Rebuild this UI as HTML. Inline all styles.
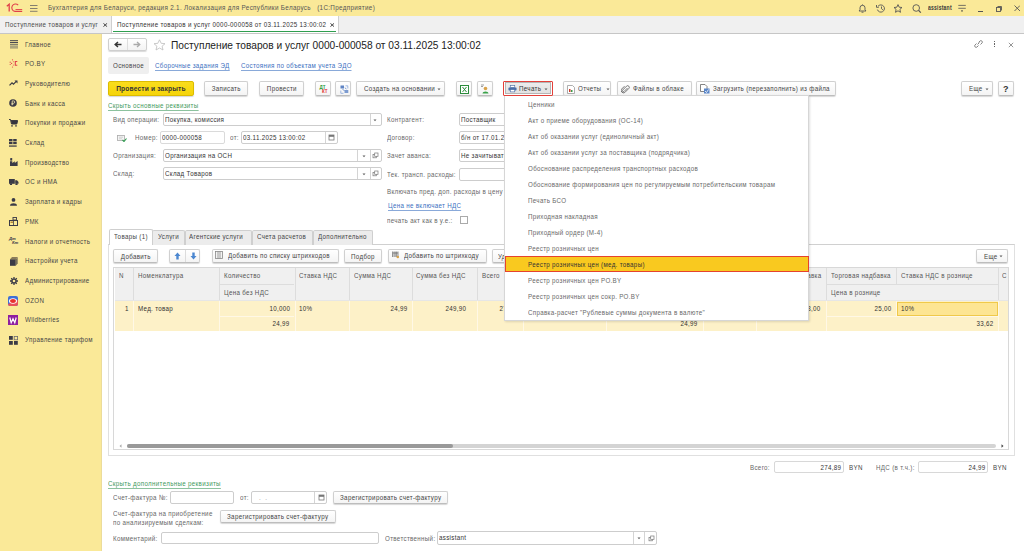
<!DOCTYPE html>
<html><head><meta charset="utf-8">
<style>
*{box-sizing:border-box;margin:0;padding:0}
html,body{width:1024px;height:551px;overflow:hidden;background:#fff;font-family:"Liberation Sans",sans-serif;font-size:7px;color:#4a4a4a}
.a{position:absolute}
.t{position:absolute;white-space:nowrap;line-height:10px;height:10px;font-size:7.8px;transform:scaleX(.795);transform-origin:0 50%;letter-spacing:.4px;margin-top:0px}
.r{transform-origin:100% 50%;text-align:right}
.sx{display:inline-block;transform:scaleX(.795);font-size:7.8px;letter-spacing:.4px;position:relative;top:.8px}
#title{left:0;top:0;width:1024px;height:16px;background:#fae998}
#tabs{left:0;top:16px;width:1024px;height:18px;background:#f0f0f0;border-bottom:1px solid #c6c6c6}
#side{left:0;top:34px;width:101.8px;height:517px;background:#fae998;border-right:1px solid #ecdc9a}
.si{left:25px;color:#474747;margin-top:0.3px}
.btn{position:absolute;display:flex;justify-content:center;align-items:center;border:1px solid #d0d0d0;border-bottom-color:#bdbdbd;border-radius:2px;background:linear-gradient(#ffffff,#f4f4f4);box-shadow:0 1px 1px rgba(0,0,0,.16);color:#444;text-align:center;white-space:nowrap;line-height:12px;font-size:7px}
.inp{position:absolute;border:1px solid #cdcdcd;border-radius:2px;background:#fff;color:#333;white-space:nowrap;line-height:10.2px;padding-left:0.5px;font-size:7px;overflow:hidden}
.lbl{color:#676767}
.dd{position:absolute;top:0;bottom:0;border-left:1px solid #d4d4d4}
.link-g{color:#3f9a5d}.link-g::after{content:"";position:absolute;left:0;right:0;top:9px;height:.8px;background:rgba(63,154,93,.6)}
.link-b{color:#3b6fc0}.link-b::after{content:"";position:absolute;left:0;right:0;top:9px;height:.8px;background:rgba(59,111,192,.6)}
</style></head><body>

<!-- Title bar -->
<div id="title" class="a">
  <svg class="a" style="left:6px;top:3px" width="17" height="10" viewBox="0 0 17 10">
    <path d="M0.8 3.2L3.2 1.2V8.6" stroke="#e0404a" stroke-width="1.3" fill="none"/>
    <path d="M12.2 2.2A3.7 3.7 0 1 0 9 8.4H16.2" stroke="#e0404a" stroke-width="1.1" fill="none"/>
    <path d="M9.5 6.5H16.2" stroke="#e0404a" stroke-width="0.9" fill="none"/>
  </svg>
  <svg class="a" style="left:30px;top:5px" width="8" height="7" viewBox="0 0 8 7">
    <path d="M0 0.5H7.5M0 3.5H7.5M0 6.3H7.5" stroke="#77736a" stroke-width="0.9"/>
  </svg>
  <div class="t" style="left:48px;top:3px;color:#555;transform:scaleX(.807)">Бухгалтерия для Беларуси, редакция 2.1. Локализация для Республики Беларусь&nbsp;&nbsp; (1С:Предприятие)</div>
</div>

<!-- Tab bar -->
<div id="tabs" class="a">
  <div class="t" style="left:5px;top:3.6px;color:#4a4a4a">Поступление товаров и услуг</div><svg class="a" style="left:103px;top:7px" width="4.5" height="4" viewBox="0 0 4.5 4"><path d="M0.4 0.3L4.1 3.7M4.1 0.3L0.4 3.7" stroke="#444" stroke-width="1"/></svg>
  <div class="a" style="left:111px;top:0;width:228px;height:17px;background:#fff;border-left:1px solid #cfcfcf;border-right:1px solid #cfcfcf"></div>
  <div class="a" style="left:113px;top:14.5px;width:223px;height:1.5px;background:#2f9e4f"></div>
  <div class="t" style="left:117px;top:3.6px;color:#333;transform:scaleX(.798)">Поступление товаров и услуг 0000-000058 от 03.11.2025 13:00:02</div><svg class="a" style="left:329.5px;top:7px" width="4.5" height="4" viewBox="0 0 4.5 4"><path d="M0.4 0.3L4.1 3.7M4.1 0.3L0.4 3.7" stroke="#444" stroke-width="1"/></svg>
</div>

<!-- Sidebar -->
<div id="side" class="a"></div>
<div id="sideitems">
  <div class="t si" style="top:39.3px">Главное</div>
  <div class="t si" style="top:59px">РО.BY</div>
  <div class="t si" style="top:78.7px">Руководителю</div>
  <div class="t si" style="top:98.4px">Банк и касса</div>
  <div class="t si" style="top:118.1px">Покупки и продажи</div>
  <div class="t si" style="top:137.8px">Склад</div>
  <div class="t si" style="top:157.5px">Производство</div>
  <div class="t si" style="top:177.2px">ОС и НМА</div>
  <div class="t si" style="top:196.9px">Зарплата и кадры</div>
  <div class="t si" style="top:216.6px">РМК</div>
  <div class="t si" style="top:236.3px">Налоги и отчетность</div>
  <div class="t si" style="top:256px">Настройки учета</div>
  <div class="t si" style="top:275.7px">Администрирование</div>
  <div class="t si" style="top:295.4px">OZON</div>
  <div class="t si" style="top:315.1px">Wildberries</div>
  <div class="t si" style="top:334.8px">Управление тарифом</div>
</div>

<!-- Header of form -->
<div class="a" style="left:108px;top:38px;width:39px;height:13px;border:1px solid #cfcfcf;border-radius:2px;background:linear-gradient(#fff,#f3f3f3);box-shadow:0 1px 1px rgba(0,0,0,.15)"></div>
<div class="a" style="left:127px;top:39px;width:1px;height:11px;background:#dedede"></div>
<svg class="a" style="left:114px;top:41px" width="8" height="7" viewBox="0 0 8 7"><path d="M7.5 3.5H1.5M4 1L1.2 3.5L4 6" stroke="#333" stroke-width="1.5" fill="none"/></svg>
<svg class="a" style="left:133px;top:41px" width="8" height="7" viewBox="0 0 8 7"><path d="M0.5 3.5H6.5M4 1L6.8 3.5L4 6" stroke="#aaa" stroke-width="1.3" fill="none"/></svg>
<svg class="a" style="left:153px;top:39px" width="13" height="12" viewBox="0 0 13 12"><path d="M6.5 0.8L8.2 4.3L12 4.7L9.1 7.2L10 11L6.5 9L3 11L3.9 7.2L1 4.7L4.8 4.3Z" stroke="#bdbdbd" stroke-width="0.8" fill="none"/></svg>
<div class="a" style="left:171px;top:38.7px;height:14px;line-height:14px;font-size:10.18px;color:#222;white-space:nowrap">Поступление товаров и услуг 0000-000058 от 03.11.2025 13:00:02</div>
<svg class="a" style="left:973px;top:39px" width="11" height="10" viewBox="0 0 11 10"><path d="M4.5 5.5L6.5 3.5M3.5 4.5L1.8 6.2A1.5 1.5 0 0 0 3.8 8.2L5.5 6.5M7.5 5.5L9.2 3.8A1.5 1.5 0 0 0 7.2 1.8L5.5 3.5" stroke="#777" stroke-width="0.9" fill="none"/></svg>
<div class="a" style="left:993.5px;top:41px;width:1.3px;height:6px;border-top:1.5px solid #666;border-bottom:1.5px solid #666;background:linear-gradient(#fff 1px,#666 1px,#666 3px,#fff 3px)"></div>
<svg class="a" style="left:1007.5px;top:41.5px" width="6" height="6" viewBox="0 0 6 6"><path d="M0.8 0.8L5.2 5.2M5.2 0.8L0.8 5.2" stroke="#8a8a8a" stroke-width="0.9"/></svg>

<div class="a" style="left:108px;top:57px;width:41px;height:17px;background:#efefef;border-radius:2px"></div>
<div class="t" style="left:113px;top:61px;color:#444">Основное</div>
<div class="t link-b" style="left:155px;top:61px">Сборочные задания ЭД</div>
<div class="t link-b" style="left:241px;top:61px">Состояния по объектам учета ЭДО</div>

<!-- Command bar -->
<div class="btn" style="left:108px;top:81.2px;width:86px;height:14.4px;background:linear-gradient(#fadd1c,#f5d40a);border-color:#dcbc00;color:#333"><span class="sx" style="font-weight:bold;transform:scaleX(.85);letter-spacing:.2px">Провести и закрыть</span></div>
<div class="btn" style="left:204px;top:81.2px;width:44px;height:14.4px"><span class="sx">Записать</span></div>
<div class="btn" style="left:259px;top:81.2px;width:45px;height:14.4px"><span class="sx">Провести</span></div>
<div class="btn" style="left:315px;top:81.2px;width:16px;height:14.4px"></div>
<div class="a" style="left:319.5px;top:84.5px;font-size:4.5px;line-height:5px;color:#2a9a3a;font-weight:bold">ДТ</div>
<div class="a" style="left:322px;top:88.5px;font-size:4.5px;line-height:5px;color:#e03030;font-weight:bold">КТ</div>
<div class="btn" style="left:335px;top:81.2px;width:16px;height:14.4px"></div>
<svg class="a" style="left:339.5px;top:84.5px" width="9" height="9" viewBox="0 0 9 9"><rect x="0.5" y="0.5" width="3.5" height="3" fill="#5f84c4"/><rect x="4.5" y="5" width="3.8" height="3" fill="#7c9bd0"/><path d="M5.5 0.8H7.8V3.5M3.5 8.3H0.8V5.5" stroke="#8aa7da" stroke-width="0.8" fill="none"/><path d="M2.5 4.5L4.5 5.5M4.8 2.8L6.5 4" stroke="#5f84c4" stroke-width="0.8"/></svg>
<div class="btn" style="left:356px;top:81.2px;width:89px;height:14.4px;justify-content:flex-start;padding-left:7px"><span class="sx" style="transform-origin:0 50%;transform:scaleX(.8)">Создать на основании</span></div>
<svg class="a tri" style="left:437.3px;top:88.3px" width="4" height="3" viewBox="0 0 4 3"><path d="M0.5 0.5H3.5L2 2.2Z" fill="#5a5a5a"/></svg>
<div class="btn" style="left:456px;top:81.2px;width:15.5px;height:14.4px"></div>
<div class="a" style="left:460px;top:85px;width:8.5px;height:8.5px;border:1px solid #2c8c3c;background:#fff"></div>
<svg class="a" style="left:461px;top:86px" width="7" height="7" viewBox="0 0 7 7"><path d="M1.5 1L5.5 6M5.5 1L1.5 6" stroke="#2c8c3c" stroke-width="1"/></svg>
<div class="btn" style="left:477px;top:81.2px;width:16px;height:14.4px"></div>
<svg class="a" style="left:480px;top:84px" width="10" height="10" viewBox="0 0 10 10"><circle cx="5.5" cy="4.5" r="1.8" fill="#d9a34a"/><path d="M2.5 9.5C2.5 6.8 8.5 6.8 8.5 9.5Z" fill="#3aa24a"/><path d="M1 1H4M1 2.5H3" stroke="#777" stroke-width="0.7"/></svg>
<!-- Печать pressed with red outline -->
<div class="a" style="left:503px;top:80.8px;width:50px;height:14.8px;border:1.3px solid #e3403a;border-radius:1px;z-index:5"></div>
<div class="a" style="left:504.8px;top:82.3px;width:46.5px;height:11.8px;background:linear-gradient(#ececec,#e2e2e2);border:1px solid #b5b5b5"></div>
<svg class="a" style="left:507.5px;top:85px" width="9" height="7.5" viewBox="0 0 10 8"><rect x="2.5" y="0.5" width="5" height="2" fill="#fff" stroke="#4b6ea8" stroke-width="0.7"/><rect x="0.5" y="2.5" width="9" height="3.5" rx="0.8" fill="#4b6ea8"/><rect x="2.5" y="5" width="5" height="2.5" fill="#fff" stroke="#4b6ea8" stroke-width="0.7"/></svg>
<div class="t" style="left:519px;top:84px;color:#333">Печать</div>
<svg class="a tri" style="left:544.3px;top:88.3px" width="4" height="3" viewBox="0 0 4 3"><path d="M0.5 0.5H3.5L2 2.2Z" fill="#5a5a5a"/></svg>
<div class="btn" style="left:563px;top:81.2px;width:48px;height:14.4px"></div>
<svg class="a" style="left:567px;top:84.5px" width="8" height="9" viewBox="0 0 8 9"><path d="M0.5 0.5H5.5L7.5 2.5V8.5H0.5Z" fill="#fff" stroke="#999" stroke-width="0.8"/><rect x="2" y="4" width="1.5" height="3" fill="#d03a2a"/><rect x="4" y="5" width="1.5" height="2" fill="#3a9a4a"/></svg>
<div class="t" style="left:578px;top:84px;color:#444">Отчеты</div>
<svg class="a tri" style="left:605.8px;top:88.3px" width="4" height="3" viewBox="0 0 4 3"><path d="M0.5 0.5H3.5L2 2.2Z" fill="#5a5a5a"/></svg>
<div class="btn" style="left:617px;top:81.2px;width:74.5px;height:14.4px"></div>
<svg class="a" style="left:621px;top:84.5px" width="9" height="9" viewBox="0 0 9 9"><path d="M6.5 3L3 6.5A1 1 0 0 1 1.6 5.1L5.5 1.2A1.6 1.6 0 0 1 7.8 3.5L3.8 7.5A2.4 2.4 0 0 1 0.5 4.2L3.5 1.2" stroke="#666" stroke-width="0.9" fill="none"/></svg>
<div class="t" style="left:632.5px;top:84px;color:#444">Файлы в облаке</div>
<div class="btn" style="left:696px;top:81.2px;width:139.5px;height:14.4px"></div>
<svg class="a" style="left:700px;top:84px" width="10" height="10" viewBox="0 0 10 10"><path d="M0.5 0.5H5L7 2.5V7.5H0.5Z" fill="#fff" stroke="#666" stroke-width="0.8"/><path d="M4 4.5H9.5V9.5H4Z" fill="#5a86c8"/><path d="M5 7L6.5 8.5L8.5 5.5" stroke="#fff" stroke-width="0.8" fill="none"/></svg>
<div class="t" style="left:712.5px;top:84px;color:#444">Загрузить (перезаполнить) из файла</div>
<div class="btn" style="left:961px;top:81.2px;width:32px;height:14.4px;justify-content:flex-start;padding-left:7px"><span class="sx" style="transform-origin:0 50%">Еще</span></div>
<svg class="a tri" style="left:984.8px;top:88.3px" width="4" height="3" viewBox="0 0 4 3"><path d="M0.5 0.5H3.5L2 2.2Z" fill="#5a5a5a"/></svg>
<div class="btn" style="left:998px;top:81.2px;width:16px;height:14.4px;font-weight:bold;color:#333"><span class="sx" style="font-size:9px;transform:none">?</span></div>

<div class="t link-g" style="left:108px;top:101px">Скрыть основные реквизиты</div>

<!-- Form fields -->
<div class="t lbl" style="left:113px;top:115px">Вид операции:</div>
<div class="inp" style="left:163px;top:113px;width:218.5px;height:13px"><span class="sx" style="transform-origin:0 50%">Покупка, комиссия</span><div class="dd" style="left:205.8px"></div></div>
<svg class="a tri" style="left:373.3px;top:118.8px" width="4" height="3" viewBox="0 0 4 3"><path d="M0.5 0.5H3.5L2 2.2Z" fill="#5a5a5a"/></svg>

<svg class="a" style="left:117px;top:134.5px" width="10" height="7" viewBox="0 0 10 7"><rect x="0.5" y="0.5" width="7" height="5" fill="#f4f4f4" stroke="#aaa" stroke-width="0.8"/><path d="M2 2.2H6M2 3.8H5" stroke="#bbb" stroke-width="0.6"/><path d="M5.5 5L7 6.5L9.5 3.5" stroke="#2f9a4f" stroke-width="1.1" fill="none"/></svg>
<div class="t lbl" style="left:134.5px;top:133px">Номер:</div>
<div class="inp" style="left:160.3px;top:131.3px;width:64.5px;height:12.8px;border-color:#dadada"><span class="sx" style="transform-origin:0 50%">0000-000058</span></div>
<div class="t lbl" style="left:230px;top:133px">от:</div>
<div class="inp" style="left:241.2px;top:131.2px;width:97px;height:12.5px"><span class="sx" style="transform-origin:0 50%">03.11.2025 13:00:02</span><div class="dd" style="left:83.3px"></div></div>
<svg class="a" style="left:328px;top:134px" width="7" height="7" viewBox="0 0 7 7"><rect x="1" y="1" width="5" height="5" fill="#fff" stroke="#777" stroke-width="0.8"/><rect x="1" y="1" width="5" height="1.8" fill="#777"/></svg>

<div class="t lbl" style="left:113px;top:151px">Организация:</div>
<div class="inp" style="left:163px;top:149.2px;width:218.5px;height:13px"><span class="sx" style="transform-origin:0 50%">Организация на ОСН</span><div class="dd" style="left:193.3px"></div><div class="dd" style="left:205.6px"></div></div>
<svg class="a tri" style="left:362.1px;top:154.8px" width="4" height="3" viewBox="0 0 4 3"><path d="M0.5 0.5H3.5L2 2.2Z" fill="#5a5a5a"/></svg>
<svg class="a" style="left:372px;top:152px" width="7" height="7" viewBox="0 0 7 7"><rect x="1" y="2.5" width="3.3" height="3.3" fill="none" stroke="#777" stroke-width="0.7"/><rect x="2.7" y="1" width="3.3" height="3.3" fill="#fff" stroke="#777" stroke-width="0.7"/></svg>

<div class="t lbl" style="left:113px;top:169px">Склад:</div>
<div class="inp" style="left:163px;top:167.3px;width:218.5px;height:13px"><span class="sx" style="transform-origin:0 50%">Склад Товаров</span><div class="dd" style="left:193.3px"></div><div class="dd" style="left:205.6px"></div></div>
<svg class="a tri" style="left:362.1px;top:172.8px" width="4" height="3" viewBox="0 0 4 3"><path d="M0.5 0.5H3.5L2 2.2Z" fill="#5a5a5a"/></svg>
<svg class="a" style="left:372px;top:170px" width="7" height="7" viewBox="0 0 7 7"><rect x="1" y="2.5" width="3.3" height="3.3" fill="none" stroke="#777" stroke-width="0.7"/><rect x="2.7" y="1" width="3.3" height="3.3" fill="#fff" stroke="#777" stroke-width="0.7"/></svg>

<div class="t lbl" style="left:386.6px;top:115px">Контрагент:</div>
<div class="inp" style="left:459.3px;top:113.3px;width:150px;height:12.5px"><span class="sx" style="transform-origin:0 50%">Поставщик</span></div>
<div class="t lbl" style="left:386.6px;top:133px">Договор:</div>
<div class="inp" style="left:459.3px;top:131.3px;width:150px;height:12.3px"><span class="sx" style="transform-origin:0 50%">б/н от 17.01.2025</span></div>
<div class="t lbl" style="left:386.6px;top:151px">Зачет аванса:</div>
<div class="inp" style="left:459.3px;top:149.2px;width:150px;height:12.8px"><span class="sx" style="transform-origin:0 50%">Не зачитывать</span></div>
<div class="t lbl" style="left:386.6px;top:169.5px">Тек. трансп. расходы:</div>
<div class="inp" style="left:459.3px;top:167.5px;width:150px;height:13px"></div>
<div class="t lbl" style="left:386.6px;top:187px">Включать пред. доп. расходы в цену</div>
<div class="t link-b" style="left:387.8px;top:201px">Цена не включает НДС</div>
<div class="t lbl" style="left:386.6px;top:216px">печать акт как в у.е.:</div>
<div class="a" style="left:459.7px;top:216.3px;width:8px;height:8px;border:1px solid #aaa;background:#fff"></div>

<!-- Tabs -->
<div class="a" style="left:108px;top:244px;width:906.5px;height:211.5px;border:1px solid #e0e0e0;border-top-color:#d0d0d0"></div>
<div class="a" style="left:152px;top:229.5px;width:32.5px;height:15px;background:#ececec;border:1px solid #cfcfcf;border-bottom:none;border-radius:2px 2px 0 0"></div>
<div class="a" style="left:184.5px;top:229.5px;width:67px;height:15px;background:#ececec;border:1px solid #cfcfcf;border-bottom:none;border-radius:2px 2px 0 0"></div>
<div class="a" style="left:251.5px;top:229.5px;width:61px;height:15px;background:#ececec;border:1px solid #cfcfcf;border-bottom:none;border-radius:2px 2px 0 0"></div>
<div class="a" style="left:312.5px;top:229.5px;width:60px;height:15px;background:#ececec;border:1px solid #cfcfcf;border-bottom:none;border-radius:2px 2px 0 0"></div>
<div class="a" style="left:108.5px;top:229px;width:44px;height:16px;background:#fff;border:1px solid #cfcfcf;border-bottom:none;border-radius:2px 2px 0 0"></div>
<div class="t" style="left:113.5px;top:232px;color:#444">Товары (1)</div>
<div class="t" style="left:157.5px;top:232px;color:#444">Услуги</div>
<div class="t" style="left:189px;top:232px;color:#444">Агентские услуги</div>
<div class="t" style="left:256.5px;top:232px;color:#444">Счета расчетов</div>
<div class="t" style="left:317.5px;top:232px;color:#444">Дополнительно</div>

<!-- Table toolbar -->
<div class="btn" style="left:113px;top:249px;width:44.7px;height:13.5px"><span class="sx">Добавить</span></div>
<div class="btn" style="left:168.7px;top:249px;width:31.3px;height:13.5px"></div>
<div class="a" style="left:185px;top:250px;width:1px;height:12px;background:#dcdcdc"></div>
<svg class="a" style="left:174px;top:252px" width="7" height="8" viewBox="0 0 7 8"><path d="M3.5 0.5L6.5 4H4.7V7.5H2.3V4H0.5Z" fill="#4a86d0"/></svg>
<svg class="a" style="left:189.5px;top:252px" width="7" height="8" viewBox="0 0 7 8"><path d="M3.5 7.5L6.5 4H4.7V0.5H2.3V4H0.5Z" fill="#4a86d0"/></svg>
<div class="btn" style="left:211.7px;top:249px;width:127.2px;height:13.5px"></div>
<svg class="a" style="left:215px;top:251px" width="8" height="8" viewBox="0 0 8 8"><rect x="0.5" y="0.5" width="7" height="7" fill="#f3f3f3" stroke="#888" stroke-width="0.8"/><path d="M3 0.5V7.5M5 0.5V7.5" stroke="#888" stroke-width="0.8"/></svg>
<div class="t" style="left:227.5px;top:251px;color:#444">Добавить по списку штрихкодов</div>
<div class="btn" style="left:344.2px;top:249px;width:38.2px;height:13.5px"><span class="sx">Подбор</span></div>
<div class="btn" style="left:387.7px;top:249px;width:99.3px;height:13.5px"></div>
<svg class="a" style="left:392px;top:251px" width="8" height="8" viewBox="0 0 8 8"><path d="M0.5 0.5V6M2 0.5V6M3.2 0.5V6M4.6 0.5V6M6 0.5V6" stroke="#666" stroke-width="0.7"/><path d="M1 2H6" stroke="#666" stroke-width="0.7"/><circle cx="5.8" cy="6" r="1.3" fill="#d9a34a"/></svg>
<div class="t" style="left:403.5px;top:251px;color:#444">Добавить по штрихкоду</div>
<div class="btn" style="left:492px;top:249px;width:40px;height:13.5px;justify-content:flex-start;padding-left:5px"><span class="sx" style="transform-origin:0 50%">Удалить</span></div>
<div class="btn" style="left:975.5px;top:249px;width:32.3px;height:13.5px;justify-content:flex-start;padding-left:7px"><span class="sx" style="transform-origin:0 50%">Еще</span></div>
<svg class="a tri" style="left:999.3px;top:255.3px" width="4" height="3" viewBox="0 0 4 3"><path d="M0.5 0.5H3.5L2 2.2Z" fill="#5a5a5a"/></svg>

<!-- Table -->
<div class="a" style="left:113px;top:267.3px;width:895.5px;height:182.5px;border:1px solid #d8d8d8;background:#fff"></div>
<div class="a" style="left:114.5px;top:268.3px;width:893px;height:32.5px;background:#f0f0f0"></div>
<div class="a" style="left:114.5px;top:300.6px;width:893px;height:30.2px;background:#fdf1c8"></div>
<!-- header vertical lines -->
<div class="a" style="left:133.2px;top:268px;width:1px;height:32.6px;background:#dddddd"></div><div class="a" style="left:133.2px;top:301px;width:1px;height:29.8px;background:#fff8e6"></div>
<div class="a" style="left:219.4px;top:268px;width:1px;height:32.6px;background:#dddddd"></div><div class="a" style="left:219.4px;top:301px;width:1px;height:29.8px;background:#fff8e6"></div>
<div class="a" style="left:294.5px;top:268px;width:1px;height:32.6px;background:#dddddd"></div><div class="a" style="left:294.5px;top:301px;width:1px;height:29.8px;background:#fff8e6"></div>
<div class="a" style="left:349.3px;top:268px;width:1px;height:32.6px;background:#dddddd"></div><div class="a" style="left:349.3px;top:301px;width:1px;height:29.8px;background:#fff8e6"></div>
<div class="a" style="left:411.6px;top:268px;width:1px;height:32.6px;background:#dddddd"></div><div class="a" style="left:411.6px;top:301px;width:1px;height:29.8px;background:#fff8e6"></div>
<div class="a" style="left:477.3px;top:268px;width:1px;height:32.6px;background:#dddddd"></div><div class="a" style="left:477.3px;top:301px;width:1px;height:29.8px;background:#fff8e6"></div>
<div class="a" style="left:523.2px;top:268px;width:1px;height:32.6px;background:#dddddd"></div><div class="a" style="left:523.2px;top:301px;width:1px;height:29.8px;background:#fff8e6"></div>
<div class="a" style="left:605.5px;top:268px;width:1px;height:32.6px;background:#dddddd"></div><div class="a" style="left:605.5px;top:301px;width:1px;height:29.8px;background:#fff8e6"></div>
<div class="a" style="left:702.5px;top:268px;width:1px;height:32.6px;background:#dddddd"></div><div class="a" style="left:702.5px;top:301px;width:1px;height:29.8px;background:#fff8e6"></div>
<div class="a" style="left:755.5px;top:268px;width:1px;height:32.6px;background:#dddddd"></div><div class="a" style="left:755.5px;top:301px;width:1px;height:29.8px;background:#fff8e6"></div>
<div class="a" style="left:825.5px;top:268px;width:1px;height:32.6px;background:#dddddd"></div><div class="a" style="left:825.5px;top:301px;width:1px;height:29.8px;background:#fff8e6"></div>
<div class="a" style="left:896.2px;top:268px;width:1px;height:16.5px;background:#dddddd"></div><div class="a" style="left:896.2px;top:301px;width:1px;height:15px;background:#fff8e6"></div>
<div class="a" style="left:998.4px;top:268px;width:1px;height:32.6px;background:#dddddd"></div><div class="a" style="left:998.4px;top:301px;width:1px;height:29.8px;background:#fff8e6"></div>
<!-- row sublines -->
<div class="a" style="left:219.4px;top:284.2px;width:75px;height:1px;background:#dddddd"></div>
<div class="a" style="left:825.5px;top:284.2px;width:173px;height:1px;background:#dddddd"></div>
<div class="a" style="left:114.5px;top:300.2px;width:893px;height:1px;background:#e6e6e6"></div>
<div class="a" style="left:219.4px;top:315.9px;width:75px;height:1px;background:#fff8e6"></div>
<div class="a" style="left:523.2px;top:315.9px;width:232px;height:1px;background:#fff8e6"></div>
<div class="a" style="left:825.5px;top:315.9px;width:173px;height:1px;background:#fff8e6"></div>

<!-- selected cell -->
<div class="a" style="left:897px;top:301.5px;width:101px;height:14px;background:#fde593;border:1px solid #f0c94a"></div>
<!-- header texts -->
<div class="t" style="left:118.5px;top:271px;color:#555">N</div>
<div class="t" style="left:138px;top:271px;color:#555">Номенклатура</div>
<div class="t" style="left:224px;top:271px;color:#555">Количество</div>
<div class="t" style="left:224px;top:287.5px;color:#555">Цена без НДС</div>
<div class="t" style="left:299px;top:271px;color:#555">Ставка НДС</div>
<div class="t" style="left:354px;top:271px;color:#555">Сумма НДС</div>
<div class="t" style="left:416px;top:271px;color:#555">Сумма без НДС</div>
<div class="t" style="left:482px;top:271px;color:#555">Всего</div>
<div class="t" style="left:792px;top:271px;color:#555">надбавка</div>
<div class="t" style="left:830.5px;top:271px;color:#555">Торговая надбавка</div>
<div class="t" style="left:830.5px;top:287.5px;color:#555">Цена в рознице</div>
<div class="t" style="left:901px;top:271px;color:#555">Ставка НДС в рознице</div>
<div class="t" style="left:1002px;top:271px;color:#555">С</div>
<!-- data texts -->
<div class="t r" style="right:895.6px;top:304px;color:#333">1</div>
<div class="t" style="left:138px;top:304px;color:#333">Мед. товар</div>
<div class="t r" style="right:734px;top:304px;color:#333">10,000</div>
<div class="t r" style="right:734px;top:319px;color:#333">24,99</div>
<div class="t" style="left:299px;top:304px;color:#333">10%</div>
<div class="t r" style="right:616.4px;top:304px;color:#333">24,99</div>
<div class="t r" style="right:557.7px;top:304px;color:#333">249,90</div>
<div class="t r" style="right:504px;top:304px;color:#333">274,89</div>
<div class="t r" style="right:326px;top:319px;color:#333">24,99</div>
<div class="t r" style="right:203px;top:304px;color:#333">18,00</div>
<div class="t r" style="right:132px;top:304px;color:#333">25,00</div>
<div class="t" style="left:901px;top:304px;color:#333">10%</div>
<div class="t r" style="right:30px;top:319px;color:#333">33,62</div>
<!-- scrollbar -->
<div class="a" style="left:126.5px;top:443.7px;width:869px;height:4px;border-radius:2px;background:#d4d4d4"></div>
<div class="a" style="left:126.5px;top:443.7px;width:326.5px;height:4px;border-radius:2px;background:#999"></div>
<svg class="a" style="left:118.5px;top:444px" width="3" height="4" viewBox="0 0 3 4"><path d="M2.5 0.3V3.7L0.5 2Z" fill="#aaa"/></svg>
<svg class="a" style="left:1000.5px;top:443.8px" width="3" height="4" viewBox="0 0 3 4"><path d="M0.5 0.3V3.7L2.5 2Z" fill="#444"/></svg>

<!-- Totals -->
<div class="t lbl" style="left:750.2px;top:462.5px">Всего:</div>
<div class="inp" style="left:774px;top:460.6px;width:69.5px;height:12.8px;border-color:#d8d8d8"></div>
<div class="t r" style="right:182.5px;top:462.5px;color:#333">274,89</div>
<div class="t" style="left:849px;top:462.5px;color:#444">BYN</div>
<div class="t lbl" style="left:875.7px;top:462.5px">НДС (в т.ч.):</div>
<div class="inp" style="left:918.2px;top:460.5px;width:69.5px;height:12.9px;border-color:#d8d8d8"></div>
<div class="t r" style="right:38.4px;top:462.5px;color:#333">24,99</div>
<div class="t" style="left:993px;top:462.5px;color:#444">BYN</div>

<!-- Bottom section -->
<div class="t link-g" style="left:108.4px;top:478.5px">Скрыть дополнительные реквизиты</div>
<div class="t lbl" style="left:113px;top:493px">Счет-фактура №:</div>
<div class="inp" style="left:170.4px;top:490.8px;width:64.1px;height:12.9px"></div>
<div class="t lbl" style="left:240px;top:493px">от:</div>
<div class="inp" style="left:251.3px;top:490.8px;width:75.3px;height:12.9px;color:#999"><span class="sx" style="transform-origin:0 50%">&nbsp;&nbsp; .&nbsp; .</span><div class="dd" style="left:61.8px"></div></div>
<svg class="a" style="left:317.5px;top:493.5px" width="7" height="7" viewBox="0 0 7 7"><rect x="1" y="1" width="5" height="5" fill="#fff" stroke="#777" stroke-width="0.8"/><rect x="1" y="1" width="5" height="1.8" fill="#777"/></svg>
<div class="btn" style="left:332.6px;top:490.6px;width:115.3px;height:13.5px"><span class="sx">Зарегистрировать счет-фактуру</span></div>
<div class="t lbl" style="left:113px;top:509px">Счет-фактура на приобретение</div>
<div class="t lbl" style="left:113px;top:518.2px">по анализируемым сделкам:</div>
<div class="btn" style="left:219.9px;top:509.6px;width:115.7px;height:13.6px"><span class="sx">Зарегистрировать счет-фактуру</span></div>
<div class="t lbl" style="left:113px;top:533.5px">Комментарий:</div>
<div class="inp" style="left:160.6px;top:531.5px;width:218.8px;height:12.7px"></div>
<div class="t lbl" style="left:384.5px;top:533.5px">Ответственный:</div>
<div class="inp" style="left:437.1px;top:531.4px;width:220px;height:13.2px"><span class="sx" style="transform-origin:0 50%">assistant</span><div class="dd" style="left:195.3px"></div><div class="dd" style="left:206.1px"></div></div>
<svg class="a tri" style="left:637.3px;top:537.3px" width="4" height="3" viewBox="0 0 4 3"><path d="M0.5 0.5H3.5L2 2.2Z" fill="#5a5a5a"/></svg>
<svg class="a" style="left:647.5px;top:534.5px" width="7" height="7" viewBox="0 0 7 7"><rect x="1" y="2.5" width="3.3" height="3.3" fill="none" stroke="#777" stroke-width="0.7"/><rect x="2.7" y="1" width="3.3" height="3.3" fill="#fff" stroke="#777" stroke-width="0.7"/></svg>

<!-- Dropdown menu -->
<div class="a" style="left:503.5px;top:95px;width:305px;height:226px;background:#fff;border:1px solid #d6d6d6;box-shadow:1px 1px 2px rgba(0,0,0,.12)"></div>
<div class="a" style="left:504.5px;top:256px;width:304px;height:15.8px;background:#f9c91f;border:1.2px solid #e5432e"></div>
<div class="menu">
<div class="t" style="left:528px;top:99.5px;color:#686868">Ценники</div>
<div class="t" style="left:528px;top:115.5px;color:#686868">Акт о приеме оборудования (ОС-14)</div>
<div class="t" style="left:528px;top:131.5px;color:#686868">Акт об оказании услуг (единоличный акт)</div>
<div class="t" style="left:528px;top:147.5px;color:#686868">Акт об оказании услуг за поставщика (подрядчика)</div>
<div class="t" style="left:528px;top:163.5px;color:#686868">Обоснование распределения транспортных расходов</div>
<div class="t" style="left:528px;top:179.5px;color:#686868">Обоснование формирования цен по регулируемым потребительским товарам</div>
<div class="t" style="left:528px;top:195.5px;color:#686868">Печать БСО</div>
<div class="t" style="left:528px;top:211.5px;color:#686868">Приходная накладная</div>
<div class="t" style="left:528px;top:227.5px;color:#686868">Приходный ордер (М-4)</div>
<div class="t" style="left:528px;top:243.5px;color:#686868">Реестр розничных цен</div>
<div class="t" style="left:528px;top:259.5px;color:#333">Реестр розничных цен (мед. товары)</div>
<div class="t" style="left:528px;top:275.5px;color:#686868">Реестр розничных цен РО.BY</div>
<div class="t" style="left:528px;top:291.5px;color:#686868">Реестр розничных цен сокр. РО.BY</div>
<div class="t" style="left:528px;top:307.5px;color:#686868">Справка-расчет "Рублевые суммы документа в валюте"</div>
</div>

<!-- Sidebar icons -->
<svg class="a" style="left:9.5px;top:39.5px" width="8" height="9" viewBox="0 0 8 9"><path d="M0 0.7H8" stroke="#3f3f4a" stroke-width="1"/><path d="M0 2.5H8" stroke="#4a4a52" stroke-width="1"/><path d="M0 4.3H8" stroke="#66665e" stroke-width="1"/><path d="M0 6.1H8" stroke="#77776a" stroke-width="1"/><path d="M0 7.9H8" stroke="#7a7a6a" stroke-width="1"/></svg>
<svg class="a" style="left:8.5px;top:58.5px" width="9" height="9" viewBox="0 0 9 9"><g fill="#e0404a"><circle cx="1.2" cy="3.2" r="0.6"/><circle cx="1.2" cy="5.5" r="0.6"/><circle cx="3.5" cy="0.8" r="0.6"/><circle cx="3.5" cy="8" r="0.6"/><circle cx="2.6" cy="4.4" r="0.6"/><circle cx="4.3" cy="2.8" r="0.5"/><circle cx="4.3" cy="6" r="0.5"/></g><path d="M8.3 2.5H6.3V6.3H8.3" stroke="#e0404a" stroke-width="1.1" fill="none"/></svg>
<svg class="a" style="left:9px;top:80px" width="9" height="6" viewBox="0 0 9 6"><path d="M0.5 5.3L3 2.8L4.5 4.2L7.5 1.2" stroke="#3a3a44" stroke-width="1.2" fill="none"/><path d="M5.5 0.5H8.5V3.5Z" fill="#3a3a44"/></svg>
<svg class="a" style="left:9.3px;top:99px" width="8" height="8" viewBox="0 0 8 8"><circle cx="4" cy="4" r="3.8" fill="#3b3b46"/><path d="M3.2 6.3V1.9H4.5A1.2 1.2 0 0 1 4.5 4.3H2.5M2.5 5.2H4.3" stroke="#f3e6b0" stroke-width="0.8" fill="none"/></svg>
<svg class="a" style="left:9.3px;top:119px" width="9" height="8" viewBox="0 0 9 8"><path d="M0 0.5H1.5L2.5 5H7.8L8.6 1.6H2" stroke="#35353f" stroke-width="1" fill="none"/><path d="M2 1.6H8.6L7.8 5H2.5Z" fill="#35353f"/><circle cx="3" cy="6.9" r="0.8" fill="#35353f"/><circle cx="7" cy="6.9" r="0.8" fill="#35353f"/></svg>
<svg class="a" style="left:9.3px;top:138.5px" width="8" height="8" viewBox="0 0 8 8"><g fill="#3b3b46"><rect x="0" y="0" width="3.5" height="2.2"/><rect x="4.2" y="0" width="3.5" height="2.2"/><rect x="0" y="2.8" width="3.5" height="2.2"/><rect x="4.2" y="2.8" width="3.5" height="2.2"/></g><path d="M0 6.3H7.7M0 7.5H7.7" stroke="#3b3b46" stroke-width="0.7"/></svg>
<svg class="a" style="left:9.5px;top:158.3px" width="8" height="8" viewBox="0 0 8 8"><path d="M0 8V3.2H2.3V5L4.8 3.2V5L7.6 3V8Z" fill="#3b3b46"/><rect x="0.2" y="0" width="2" height="2.6" fill="#3b3b46"/><rect x="0.2" y="0" width="1" height="0.8" fill="#7a7a6a"/></svg>
<svg class="a" style="left:9px;top:178.8px" width="9.5" height="6.5" viewBox="0 0 9.5 6.5"><rect x="0" y="0" width="5.8" height="4.8" fill="#3b3b46"/><path d="M6.2 1.2H8L9.5 3V4.8H6.2Z" fill="#3b3b46"/><circle cx="2" cy="5.3" r="1.1" fill="#3b3b46"/><circle cx="7.5" cy="5.3" r="1.1" fill="#3b3b46"/></svg>
<svg class="a" style="left:10px;top:198px" width="7" height="8" viewBox="0 0 7 8"><circle cx="3.5" cy="1.9" r="1.9" fill="#3b3b46"/><path d="M0 7.7C0 4.5 7 4.5 7 7.7Z" fill="#3b3b46"/></svg>
<svg class="a" style="left:9.2px;top:217px" width="9" height="9" viewBox="0 0 9 9"><rect x="4" y="0.5" width="3.5" height="2.5" fill="none" stroke="#3b3b46" stroke-width="0.9"/><rect x="0.5" y="3.5" width="8" height="5" fill="none" stroke="#3b3b46" stroke-width="1"/><rect x="1.5" y="4.5" width="2.5" height="1.5" fill="#b58a3a"/><path d="M4.5 3.5V8.5" stroke="#3b3b46" stroke-width="0.8"/></svg>
<div class="a" style="left:9px;top:236.5px;font-size:4.2px;line-height:4px;font-style:italic;color:#3b3b46;font-weight:bold">Дт</div>
<div class="a" style="left:12px;top:240.8px;font-size:4.2px;line-height:4px;font-style:italic;color:#3b3b46;font-weight:bold">Кт</div>
<svg class="a" style="left:9.5px;top:256.5px" width="8" height="9" viewBox="0 0 8 9"><path d="M0 2.3L2 0H7.7L5.7 2.3Z" fill="#8a7c5a"/><path d="M5.7 2.3L7.7 0V6.5L5.7 8.8Z" fill="#77705a"/><rect x="0" y="2.3" width="5.7" height="6.5" fill="#3b3b46"/></svg>
<svg class="a" style="left:9.8px;top:277px" width="8" height="8" viewBox="0 0 8 8"><g stroke="#3b3b46" stroke-width="1.3"><path d="M4 0V8M0 4H8M1.2 1.2L6.8 6.8M6.8 1.2L1.2 6.8"/></g><circle cx="4" cy="4" r="2.6" fill="#3b3b46"/><circle cx="4" cy="4" r="1.3" fill="#fae998"/></svg>
<svg class="a" style="left:8.3px;top:295.6px" width="10" height="10" viewBox="0 0 10 10"><rect x="0" y="0" width="10" height="10" rx="2" fill="#3d6fd6"/><path d="M10 4V8A2 2 0 0 1 8 10H2A2 2 0 0 1 0 8Z" fill="#e8505a"/><ellipse cx="5" cy="5" rx="4" ry="2.8" fill="#fff"/><ellipse cx="5" cy="5" rx="2.9" ry="1.9" fill="#e8302e"/></svg>
<svg class="a" style="left:8.3px;top:315.4px" width="10" height="10" viewBox="0 0 10 10"><rect x="0" y="0" width="10" height="10" fill="#8e1fa0"/><path d="M1.8 2.5L3.2 7.8L5 3.8L6.8 7.8L8.2 2.5" stroke="#fff" stroke-width="1.2" fill="none"/></svg>
<svg class="a" style="left:9px;top:335.5px" width="9" height="9" viewBox="0 0 9 9"><rect x="0" y="0" width="3.8" height="3.8" fill="#3b3b46"/><rect x="5.2" y="0.4" width="3.4" height="3.4" fill="none" stroke="#6a6a70" stroke-width="0.8"/><rect x="0" y="5" width="3.8" height="3.8" fill="#3b3b46"/><rect x="5" y="5" width="3.8" height="3.8" fill="#3b3b46"/></svg>

<!-- Title bar right icons -->
<svg class="a" style="left:857.5px;top:4px" width="9" height="9" viewBox="0 0 9 9"><path d="M1 7H8L7 5.8V3.8A2.5 2.5 0 0 0 2 3.8V5.8Z" stroke="#555" stroke-width="0.9" fill="none"/><path d="M3.5 8.2H5.5" stroke="#555" stroke-width="0.9"/><path d="M4.5 0.5V1.3" stroke="#555" stroke-width="0.9"/></svg>
<svg class="a" style="left:875.5px;top:4px" width="10" height="9" viewBox="0 0 10 9"><path d="M2 2.3A3.6 3.6 0 1 1 1.4 5.6" stroke="#555" stroke-width="0.9" fill="none"/><path d="M0.5 1V3.3H2.8" stroke="#555" stroke-width="0.9" fill="none"/><path d="M5.5 2.5V4.7L6.9 5.9" stroke="#555" stroke-width="0.9" fill="none"/></svg>
<svg class="a" style="left:893px;top:4px" width="10" height="9" viewBox="0 0 10 9"><path d="M5 0.6L6.2 3.2L9 3.5L6.9 5.4L7.5 8.3L5 6.8L2.5 8.3L3.1 5.4L1 3.5L3.8 3.2Z" stroke="#555" stroke-width="0.9" fill="none"/></svg>
<svg class="a" style="left:911.5px;top:4px" width="10" height="9" viewBox="0 0 10 9"><circle cx="4.2" cy="4" r="3.3" stroke="#555" stroke-width="0.9" fill="none"/><path d="M6.6 6.4L8.8 8.6" stroke="#555" stroke-width="1.3"/></svg>
<div class="a" style="left:927.5px;top:3px;height:10px;line-height:10px;font-size:6.6px;color:#3a3a3a;white-space:nowrap;transform:scaleX(.76);transform-origin:0 50%;letter-spacing:.3px;font-weight:bold">assistant</div>
<svg class="a" style="left:957.5px;top:4px" width="9" height="9" viewBox="0 0 9 9"><path d="M0.3 1.4H7.8M0.3 4.3H7.8" stroke="#555" stroke-width="0.8"/><rect x="3.2" y="6.3" width="1.6" height="1.2" fill="#444"/></svg>
<div class="a" style="left:978px;top:10.5px;width:5px;height:1px;background:#555"></div>
<svg class="a" style="left:995.5px;top:5.5px" width="6" height="6" viewBox="0 0 6 6"><rect x="0.5" y="1.5" width="4" height="4" fill="none" stroke="#555" stroke-width="0.9"/><path d="M1.5 0.5H5.5V4.5" stroke="#555" stroke-width="0.9" fill="none"/></svg>
<svg class="a" style="left:1013.5px;top:5px" width="6.5" height="6.5" viewBox="0 0 6.5 6.5"><path d="M0.5 0.5L6 6M6 0.5L0.5 6" stroke="#555" stroke-width="0.9"/></svg>

<!--CONTENT-->

</body></html>
